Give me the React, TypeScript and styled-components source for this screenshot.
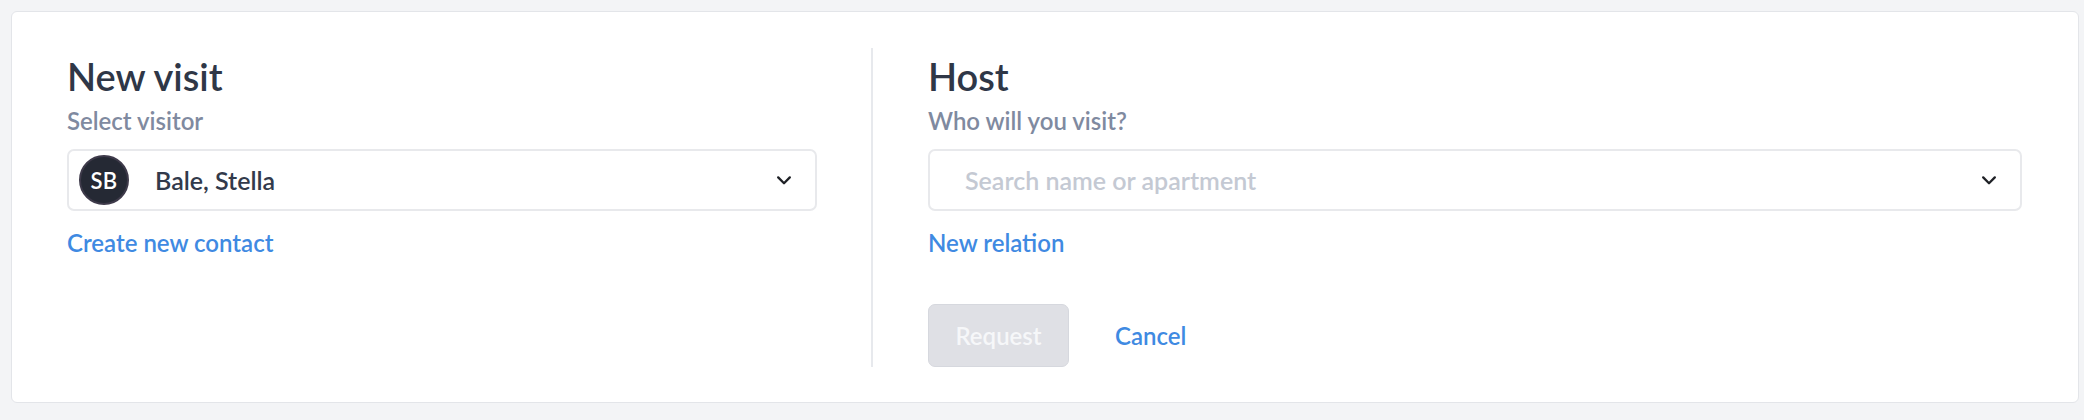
import React from "react";
import styled, { createGlobalStyle } from "styled-components";

const GlobalStyle = createGlobalStyle`
  html, body {
    margin: 0;
    padding: 0;
    background: #f3f4f6;
  }
  body {
    font-family: "Lato", "Noto Sans", sans-serif;
    -webkit-font-smoothing: antialiased;
  }
  * { box-sizing: border-box; }
`;

const Page = styled.div`
  padding: 11px 5px 11px 11px;
`;

const Card = styled.div`
  display: flex;
  background: #ffffff;
  border: 1px solid #e3e5e9;
  border-radius: 6px;
  padding: 36px 56px 35px 55px;
`;

const Column = styled.section<{ $divider?: boolean; $width?: number }>`
  display: flex;
  flex-direction: column;
  align-items: flex-start;
  ${(p) =>
    p.$divider
      ? `
    flex: 0 0 ${p.$width}px;
    box-sizing: content-box;
    padding-right: 54px;
    border-right: 2px solid #e7e9ed;
  `
      : `
    flex: 1 1 auto;
    padding-left: 55px;
    min-width: 0;
  `}
`;

const Title = styled.h2`
  margin: 0;
  font-size: 38px;
  line-height: 56px;
  font-weight: 600;
  color: #2f3747;
`;

const Label = styled.div`
  font-size: 24px;
  line-height: 34px;
  font-weight: 600;
  color: #7f8aa0;
`;

const SelectBox = styled.div`
  margin-top: 11px;
  align-self: stretch;
  height: 62px;
  display: flex;
  align-items: center;
  border: 2px solid #e8e9ec;
  border-radius: 7px;
  background: #ffffff;
  padding: 0 24px 0 10px;
`;

const Avatar = styled.div`
  width: 50px;
  height: 50px;
  flex: 0 0 50px;
  border-radius: 50%;
  background: #252934;
  border: 2px solid #3e3a4a;
  color: #ffffff;
  display: flex;
  align-items: center;
  justify-content: center;
  font-size: 22px;
  font-weight: 600;
  letter-spacing: 0.2px;
`;

const Value = styled.span`
  flex: 1 1 auto;
  margin-left: 26px;
  font-size: 25px;
  font-weight: 600;
  color: #323a4b;
`;

const Placeholder = styled.span`
  flex: 1 1 auto;
  margin-left: 25px;
  font-size: 25px;
  font-weight: 600;
  color: #c4c9d3;
`;

const Chevron = styled.svg`
  width: 14px;
  height: 9px;
  flex: 0 0 14px;
  display: block;
`;

const LinkText = styled.a<{ $mt?: number }>`
  display: block;
  margin-top: ${(p) => p.$mt ?? 15}px;
  font-size: 24px;
  line-height: 34px;
  font-weight: 600;
  color: #3f8ae2;
  text-decoration: none;
  cursor: pointer;
`;

const Actions = styled.div`
  margin-top: 44px;
  display: flex;
  align-items: center;
`;

const RequestButton = styled.button`
  width: 141px;
  height: 63px;
  border: 1px solid #d6d8de;
  border-radius: 7px;
  background: #dfe0e5;
  color: #f6f7f9;
  font-family: inherit;
  font-size: 24px;
  font-weight: 600;
  padding: 0;
`;

const CancelLink = styled.a`
  margin-left: 46px;
  font-size: 24px;
  font-weight: 600;
  color: #3f8ae2;
  cursor: pointer;
`;

const ChevronIcon = () => (
  <Chevron viewBox="0 0 14 9">
    <polyline
      points="1.2,1.4 7,7.2 12.8,1.4"
      fill="none"
      stroke="#1f2126"
      strokeWidth="2.3"
      strokeLinecap="round"
      strokeLinejoin="round"
    />
  </Chevron>
);

export default function App() {
  return (
    <>
      <GlobalStyle />
      <Page>
        <Card>
          <Column $divider $width={750}>
            <Title>New visit</Title>
            <Label>Select visitor</Label>
            <SelectBox>
              <Avatar>SB</Avatar>
              <Value>Bale, Stella</Value>
              <ChevronIcon />
            </SelectBox>
            <LinkText>Create new contact</LinkText>
          </Column>
          <Column>
            <Title>Host</Title>
            <Label>Who will you visit?</Label>
            <SelectBox>
              <Placeholder>Search name or apartment</Placeholder>
              <ChevronIcon />
            </SelectBox>
            <LinkText>New relation</LinkText>
            <Actions>
              <RequestButton disabled>Request</RequestButton>
              <CancelLink>Cancel</CancelLink>
            </Actions>
          </Column>
        </Card>
      </Page>
    </>
  );
}
